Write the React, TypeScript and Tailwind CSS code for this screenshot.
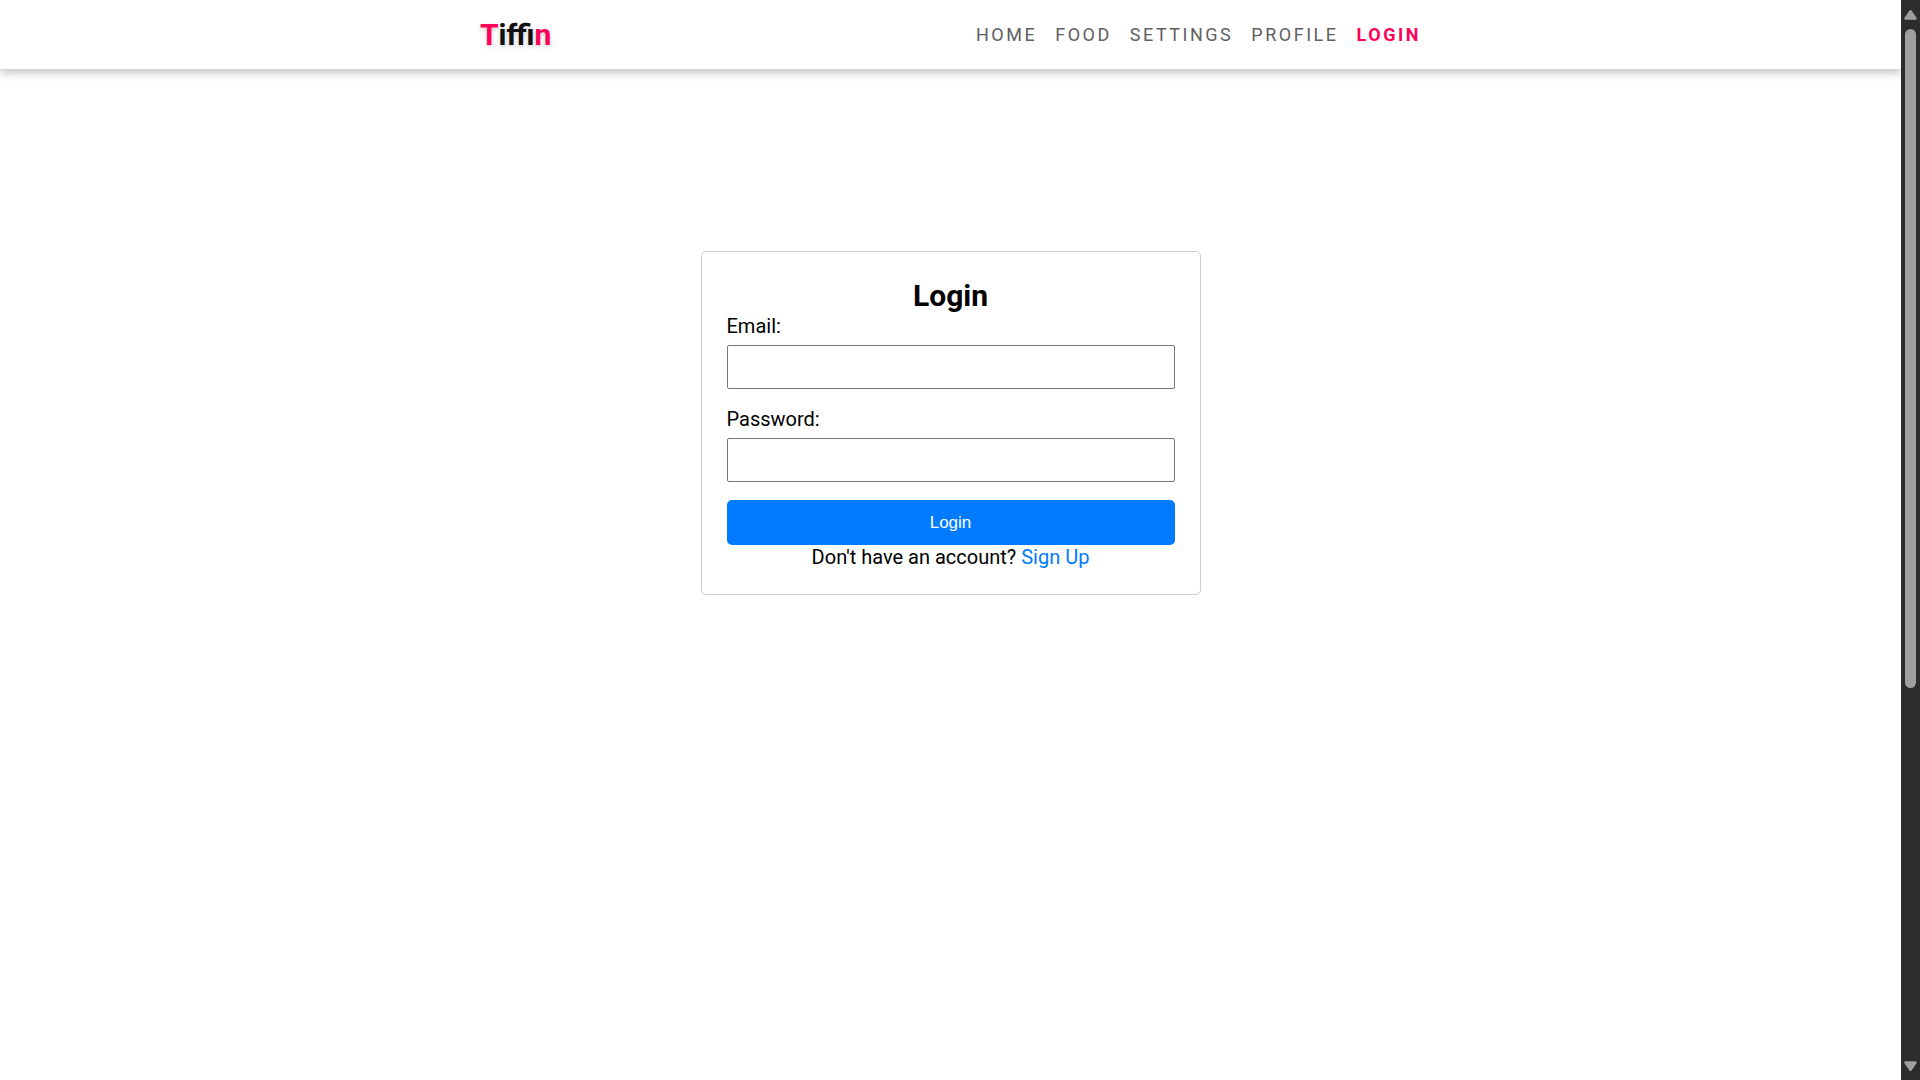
import React from "react";

const links = ["Home", "Food", "Settings", "Profile"];

function Field({ id, label, type }: { id: string; label: string; type: string }) {
  return (
    <div className="mb-[18px]">
      <label htmlFor={id} className="mb-[7px] block leading-6">{label}</label>
      <input id={id} type={type} className="block h-11 w-full rounded-[2px] border border-[#767676] bg-white px-2.5" />
    </div>
  );
}

function ScrollRail() {
  return (
    <div aria-hidden="true" className="flex w-[19px] shrink-0 flex-col items-center bg-[#2c2c2c] pt-2.5 pb-[9px]">
      <svg width="13" height="10" viewBox="0 0 13 10" className="shrink-0" fill="#9f9f9f">
        <path d="M5.5 0.6Q6.5-.6 7.5.6L12.4 7.6Q13.2 9.8 11.4 9.8H1.6Q-.2 9.8.6 7.6Z" />
      </svg>
      <div className="flex w-[11px] grow flex-col pt-[9px] pb-2">
        <div className="h-[64.4%] rounded-full bg-[#9f9f9f]" />
      </div>
      <svg width="13" height="10" viewBox="0 0 13 10" className="shrink-0" fill="#9f9f9f">
        <path d="M5.5 9.4Q6.5 10.6 7.5 9.4L12.4 2.4Q13.2.2 11.4.2H1.6Q-.2.2.6 2.4Z" />
      </svg>
    </div>
  );
}

export default function App() {
  return (
    <div className="flex h-screen bg-white font-[Roboto,sans-serif] text-[20px] text-black">
      <div className="flex min-w-0 grow flex-col">
        <header className="shadow-[0_4px_9px_rgba(0,0,0,0.23)]">
          <div className="mx-auto flex h-[69px] w-full max-w-[941px] items-center justify-between">
            <a href="#" className="text-[30px] font-bold text-[#111] [text-shadow:0_2px_4px_rgba(0,0,0,0.2)]">
              <span className="text-[#ff0059]">T</span>iffi<span className="text-[#ff0059]">n</span>
            </a>
            <nav className="flex gap-[18px] text-[18px] tracking-[0.14em] text-[#606060] uppercase">
              {links.map((l) => (
                <a key={l} href="#">{l}</a>
              ))}
              <a href="#" className="font-bold text-[#ff0059]">Login</a>
            </nav>
          </div>
        </header>
        <main className="flex grow justify-center pt-[182px]">
          <form onSubmit={(e) => e.preventDefault()} className="w-full max-w-[500px] self-start rounded-[5px] border border-[#ccc] p-[25px]">
            <h1 className="text-center text-[30px] leading-[37px] font-bold">Login</h1>
            <Field id="email" label="Email:" type="email" />
            <Field id="password" label="Password:" type="password" />
            <button type="submit" className="block h-[45px] w-full rounded-[5px] bg-[#007bff] font-['Liberation_Sans',Arial,sans-serif] text-[17px] text-white">Login</button>
            <p className="text-center leading-6">
              Don't have an account? <a href="#" className="text-[#007bff]">Sign Up</a>
            </p>
          </form>
        </main>
      </div>
      <ScrollRail />
    </div>
  );
}
